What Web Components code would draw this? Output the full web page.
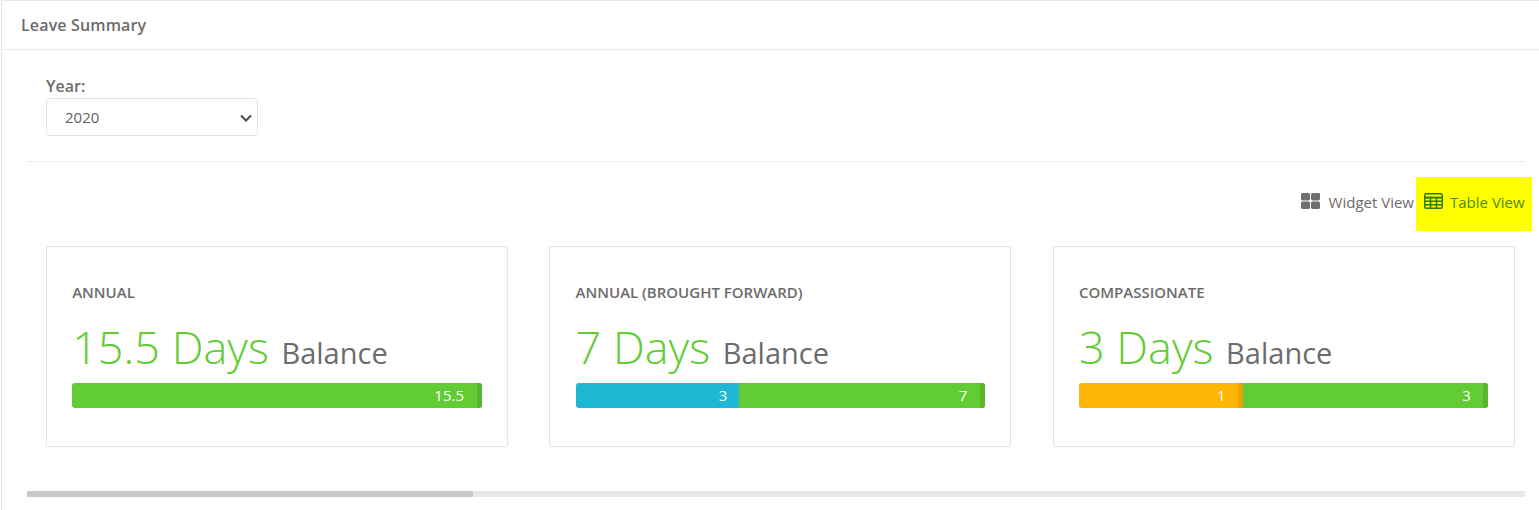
<!DOCTYPE html>
<html>
<head>
<meta charset="utf-8">
<title>Leave Summary</title>
<style>
html, body { margin: 0; padding: 0; background: #fff; overflow: hidden; }
body { font-family: "Open Sans", "Liberation Sans", sans-serif; color: #6c6c6c; }
</style>
</head>
<body>
<leave-panel heading="Leave Summary">
    <year-select label="Year:" value="2020"></year-select>
    <view-toolbar></view-toolbar>
    <card-row>
        <leave-card title="Annual" days="15.5">
            <leave-bar value="15.5" type="balance" width="100"></leave-bar>
        </leave-card>
        <leave-card title="Annual (Brought Forward)" days="7">
            <leave-bar value="3" type="info" width="40"></leave-bar>
            <leave-bar value="7" type="balance" width="60"></leave-bar>
        </leave-card>
        <leave-card title="Compassionate" days="3">
            <leave-bar value="1" type="warning" width="40.1"></leave-bar>
            <leave-bar value="3" type="balance" width="59.9"></leave-bar>
        </leave-card>
    </card-row>
    <fake-scrollbar></fake-scrollbar>
</leave-panel>

<script>
class LeavePanel extends HTMLElement {
    constructor() {
        super();
        this.attachShadow({ mode: "open" });
        this.shadowRoot.innerHTML = `
<style>
:host { display: block; height: 510px; margin-left: 1px; border-left: 1px solid #e6e6ea; border-top: 1px solid #e8e8ec; box-sizing: border-box; }
#head { height: 49px; box-sizing: border-box; border-bottom: 1px solid #e8e8ec; padding: 14px 0 0 19px; font-size: 16px; letter-spacing: 0.15px; line-height: 20px; font-weight: 600; color: #6c6c6c; }
#body { padding: 0 14px 0 25px; }
</style>
<div id="head"></div>
<div id="body"><slot></slot></div>
`;
    }

    connectedCallback() {
        this.shadowRoot.getElementById("head").textContent = this.getAttribute("heading");
    }
}
customElements.define("leave-panel", LeavePanel);

class YearSelect extends HTMLElement {
    constructor() {
        super();
        this.attachShadow({ mode: "open" });
        this.shadowRoot.innerHTML = `
<style>
:host { display: block; padding: 25px 0 25px 19px; border-bottom: 1px solid #ececec; }
label { display: block; font-size: 16px; line-height: 23px; font-weight: 600; color: #6c6c6c; }
#wrap { position: relative; width: 212px; height: 38px; }
select { width: 212px; height: 38px; box-sizing: border-box; appearance: none; -webkit-appearance: none; background: #fff; border: 1px solid #e2e2e6; border-radius: 4px; padding: 0 0 0 18px; font: 400 15px "Open Sans", sans-serif; color: #5f5f5f; outline: none; }
svg { position: absolute; right: 6px; top: 16px; pointer-events: none; }
</style>
<label></label>
<div id="wrap">
    <select><option></option></select>
    <svg width="12" height="8" viewBox="0 0 12 8"><path d="M1 1.5 6 6.5 11 1.5" fill="none" stroke="#4a4a4a" stroke-width="2"/></svg>
</div>
`;
    }

    connectedCallback() {
        this.shadowRoot.querySelector("label").textContent = this.getAttribute("label");
        this.shadowRoot.querySelector("option").textContent = this.getAttribute("value");
    }
}
customElements.define("year-select", YearSelect);

class ViewToolbar extends HTMLElement {
    constructor() {
        super();
        this.attachShadow({ mode: "open" });
        this.shadowRoot.innerHTML = `
<style>
:host { display: flex; justify-content: flex-end; margin: 15px -7px 15px 0; height: 54px; font-size: 15px; line-height: 20px; }
a { display: flex; align-items: center; gap: 8px; color: #6c6c6c; }
#widget { padding-right: 2px; gap: 9px; }
#table { background: #ffff00; color: #4f8c0a; padding: 0 0 0 8px; width: 116px; box-sizing: border-box; gap: 7px; }
svg { display: block; margin-top: -7px; }
span { margin-top: -5px; }
</style>
<a id="widget">
    <svg width="19" height="16" viewBox="0 0 19 16" fill="#6f6f6f">
        <rect x="0" y="0" width="9" height="7.4" rx="1.4"/><rect x="10" y="0" width="9" height="7.4" rx="1.4"/>
        <rect x="0" y="8.6" width="9" height="7.4" rx="1.4"/><rect x="10" y="8.6" width="9" height="7.4" rx="1.4"/>
    </svg>
    <span>Widget View</span>
</a>
<a id="table">
    <svg width="19" height="16" viewBox="0 0 19 16" fill="none" stroke="#2f7d00" stroke-width="1.5">
        <rect x="0.75" y="0.75" width="17.5" height="14.5" rx="1.5"/>
        <path d="M0.7 4.6H18.3" stroke-width="2"/>
        <path d="M0.7 8.2H18.3M0.7 11.8H18.3M6.5 4V15M12.5 4V15"/>
    </svg>
    <span>Table View</span>
</a>
`;
    }
}
customElements.define("view-toolbar", ViewToolbar);

class CardRow extends HTMLElement {
    constructor() {
        super();
        this.attachShadow({ mode: "open" });
        this.shadowRoot.innerHTML = `
<style>
:host { display: grid; grid-template-columns: repeat(3, 462px); column-gap: 41.4px; padding-left: 19px; }
</style>
<slot></slot>
`;
    }
}
customElements.define("card-row", CardRow);

class LeaveCard extends HTMLElement {
    constructor() {
        super();
        this.attachShadow({ mode: "open" });
        this.shadowRoot.innerHTML = `
<style>
:host { display: block; height: 201px; box-sizing: border-box; border: 1px solid #e4e4e6; border-radius: 2px; padding: 35px 25.5px 0 25.2px; background: #fff; }
#title { font-size: 15px; line-height: 20px; font-weight: 600; text-transform: uppercase; color: #6c6c6c; }
#amount { margin-top: 12px; height: 69px; line-height: 66px; white-space: nowrap; color: #6c6c6c; font-size: 29px; }
#days { font-size: 45px; font-weight: 300; color: #61cc33; margin-right: 5px; }
#bar { display: flex; height: 25px; border-radius: 3px; overflow: hidden; }
</style>
<div id="title"></div>
<div id="amount"><span id="days"></span> Balance</div>
<div id="bar"><slot></slot></div>
`;
    }

    connectedCallback() {
        this.shadowRoot.getElementById("title").textContent = this.getAttribute("title");
        this.shadowRoot.getElementById("days").textContent = this.getAttribute("days") + " Days";
        this.removeAttribute("title");
    }
}
customElements.define("leave-card", LeaveCard);

class LeaveBar extends HTMLElement {
    constructor() {
        super();
        this.attachShadow({ mode: "open" });
        this.shadowRoot.innerHTML = `
<style>
:host { display: block; box-sizing: border-box; height: 25px; line-height: 25px; text-align: right; color: #fff; font-size: 15px; padding-right: 12.5px; border-right: 5px solid transparent; }
:host([type="balance"]) { background: #61cc33; border-right-color: #58b52e; }
:host([type="info"]) { background: #1db8d4; border-right: 0; padding-right: 12px; }
:host([type="warning"]) { background: #ffb506; border-right-color: #eba300; }
</style>
<slot></slot>
<span id="val"></span>
`;
    }

    connectedCallback() {
        this.style.width = this.getAttribute("width") + "%";
        this.shadowRoot.getElementById("val").textContent = this.getAttribute("value");
    }
}
customElements.define("leave-bar", LeaveBar);

class FakeScrollbar extends HTMLElement {
    constructor() {
        super();
        this.attachShadow({ mode: "open" });
        this.shadowRoot.innerHTML = `
<style>
:host { display: block; height: 6px; margin-top: 44px; background: #e9e9e9; }
div { width: 446px; height: 6px; background: #c8c8c8; }
</style>
<div></div>
`;
    }
}
customElements.define("fake-scrollbar", FakeScrollbar);
</script>
</body>
</html>
